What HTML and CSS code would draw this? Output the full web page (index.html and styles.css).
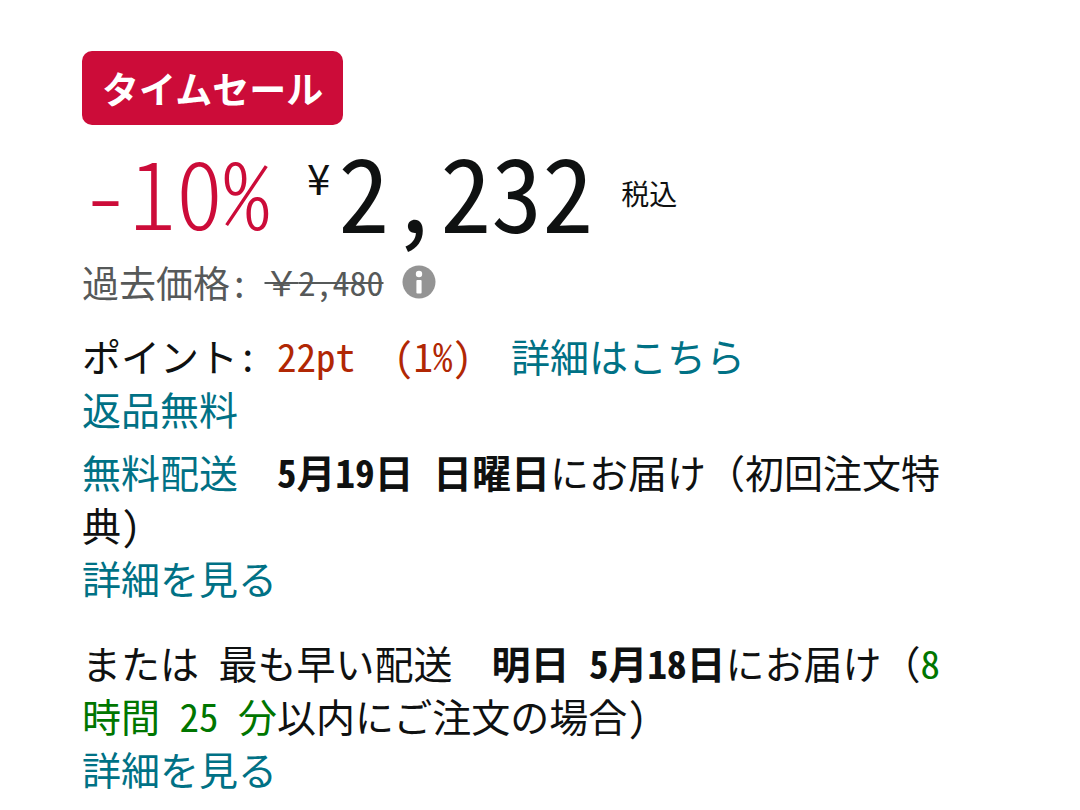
FILE: index.html
```html
<!DOCTYPE html>
<html lang="ja">
<head>
    <meta charset="UTF-8">
    <meta name="viewport" content="width=device-width, initial-scale=1.0">
    <title>タイムセール</title>
    <link rel="stylesheet" href="styles.css">
</head>
<body>
    <main class="offer">
        <span class="badge">タイムセール</span>
        <div class="price-row">
            <span class="discount">-10%</span>
            <span class="symbol">¥</span>
            <span class="price">2,232</span>
            <span class="tax">税込</span>
        </div>
        <div class="past-price">
            <span>過去価格:</span>
            <s class="old"><span class="wide">￥</span>2,480</s>
            <button type="button" class="info" aria-label="過去価格について">
                <svg viewBox="0 0 34 34" width="34" height="34">
                    <circle cx="17" cy="17" r="16.5" fill="#949494"/>
                    <circle cx="17" cy="9" r="3.2" fill="#fff"/>
                    <rect x="14.4" y="15" width="5.2" height="13.5" rx="1" fill="#fff"/>
                </svg>
            </button>
        </div>
        <p class="points">ポイント: <span class="pt">22pt&nbsp; (1%)</span>&nbsp; <a href="#">詳細はこちら</a><br><a href="#">返品無料</a></p>
        <p class="delivery"><a href="#">無料配送</a>&nbsp; <b>5月19日 日曜日</b>にお届け<span class="wide">（</span>初回注文特典）<br><a href="#">詳細を見る</a></p>
        <p class="fastest">または 最も早い配送&nbsp; <b>明日 5月18日</b>にお届け<span class="wide">（</span><span class="time">8時間 25 分</span>以内にご注文の場合）<br><a href="#">詳細を見る</a></p>
    </main>
</body>
</html>
```
FILE: styles.css
```css
body
{
    margin: 0;
    background-color: #fff;
    color: #0f1111;
    font-family: "Noto Sans CJK JP", sans-serif;
    font-size: 39px;
    line-height: 53px;
    /* half-width latin and digits */
    font-feature-settings: "hwid";
}
.wide
{
    font-feature-settings: normal;
}
.offer
{
    padding: 51px 110px 0 82px;
}
.badge
{
    display: block;
    width: fit-content;
    padding: 0 20px;
    border-radius: 10px;
    background-color: #cc0c39;
    color: #fff;
    font-size: 37px;
    font-weight: 700;
    line-height: 74px;
}
.price-row
{
    display: flex;
    align-items: flex-start;
    height: 132px;
}
.discount
{
    color: #cc0c39;
    font-size: 94px;
    font-weight: 300;
    line-height: 128px;
}
.symbol
{
    margin-left: 37px;
    font-size: 42px;
    line-height: 104px;
    font-feature-settings: normal;
}
.price
{
    margin-left: 8px;
    font-size: 102px;
    line-height: 128px;
}
.tax
{
    margin-left: 28px;
    font-size: 28px;
    line-height: 136px;
}
.past-price
{
    display: flex;
    align-items: center;
    color: #565959;
    font-size: 37px;
    line-height: 50px;
}
.old
{
    margin-left: 16px;
    font-size: 34px;
    text-decoration-thickness: 2px;
}
.info
{
    display: flex;
    margin-left: 18px;
    padding: 0;
    border: none;
    background: none;
    cursor: pointer;
}
p
{
    margin: 0;
}
a
{
    color: #007185;
    text-decoration: none;
}
a:hover
{
    text-decoration: underline;
}
.points
{
    margin-top: 22px;
}
.pt
{
    color: #b12704;
}
.delivery
{
    margin-top: 10px;
}
.fastest
{
    margin-top: 32px;
}
.time
{
    color: #007600;
}
```
